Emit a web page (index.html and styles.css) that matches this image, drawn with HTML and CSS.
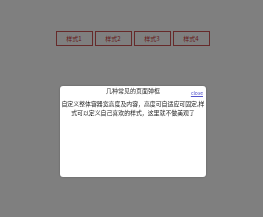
FILE: index.html
```html
<!DOCTYPE html>
<html lang="zh-CN">
<head>
    <meta charset="UTF-8">
    <title>弹框</title>
    <link rel="stylesheet" href="styles.css">
</head>
<body>

    <div class="btns">
        <button class="btn">样式1</button>
        <button class="btn">样式2</button>
        <button class="btn">样式3</button>
        <button class="btn">样式4</button>
    </div>

    <div class="mask"></div>

    <div class="dialog">
        <div class="dialog-head">
            <span class="dialog-title">几种常见的页面弹框</span>
            <a href="#" class="close">close</a>
        </div>
        <p class="dialog-body">自定义整体容器宽高度及内容，高度可自适应可固定,样式可以定义自己喜欢的样式，这里就不做美观了</p>
    </div>

</body>
</html>
```

FILE: styles.css
```css
body { margin: 0; background: #fff; font-family: "Noto Sans CJK SC", "Liberation Sans", sans-serif; }

.btns { display: flex; justify-content: center; gap: 2px; padding-top: 31px; margin-left: 2px; }
.btn { width: 37px; height: 15px; padding: 0; border: 1px solid #c55; background: #fff; color: #c33; font-size: 6px; font-family: inherit; }

.mask { position: fixed; left: 0; top: 0; right: 0; bottom: 0; background: rgba(0, 0, 0, 0.5); }

.dialog { position: fixed; left: 60px; top: 86px; width: 146px; height: 91px; background: #fff; border-radius: 3px; box-shadow: 0 0 2px rgba(0, 0, 0, 0.3); font-size: 6px; }
.dialog-head { position: relative; text-align: center; padding-top: 1px; height: 9px; line-height: 8px; }
.dialog-title { font-size: 6px; color: #333; }
.close { position: absolute; right: 3px; top: 4px; font-size: 5px; line-height: 6px; color: #55c; }
.dialog-body { margin: 3px 1px 0; font-size: 5.9px; line-height: 9px; color: #222; text-align: center; }
```
